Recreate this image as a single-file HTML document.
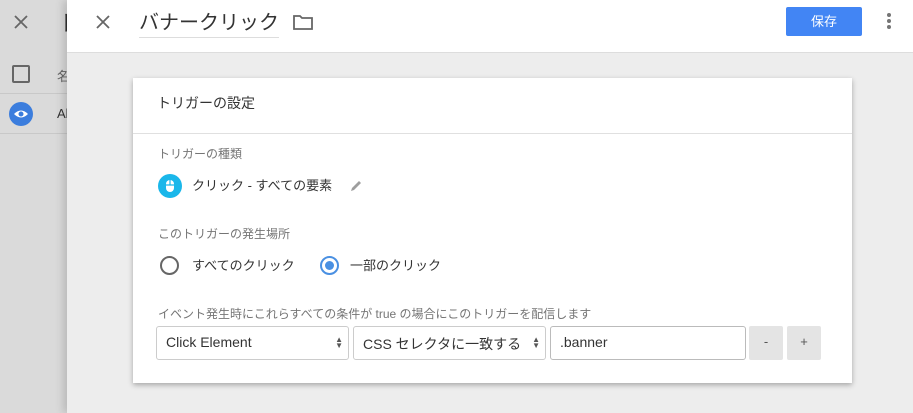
<!DOCTYPE html>
<html><head><meta charset="utf-8"><style>
*{box-sizing:border-box;margin:0;padding:0}
body{width:913px;height:413px;overflow:hidden;font-family:"Liberation Sans","Noto Sans CJK JP",sans-serif;background:#eeeeee;position:relative;color:#212121}
.left{position:absolute;left:0;top:0;width:67px;height:413px;background:#dadada;overflow:hidden}
.main{position:absolute;left:67px;top:0;width:846px;height:413px;background:#ededed;box-shadow:-4px 0 8px rgba(0,0,0,.15)}
.hdr{position:absolute;left:0;top:0;width:846px;height:53px;background:#fff;border-bottom:1px solid #ddd}
.card{position:absolute;left:133px;top:78px;width:719px;height:305px;background:#fff;box-shadow:0 2px 5px rgba(0,0,0,.3)}
.abs{position:absolute;white-space:nowrap}
.lbl{font-size:12px;color:#757575}
.sel{position:absolute;top:248px;height:34px;border:1px solid #ccc;border-radius:3px;font-size:14px;padding:7px 9px;color:#333;white-space:nowrap}
.btn{position:absolute;top:248px;width:34px;height:34px;background:#e4e4e4;border-radius:2px;text-align:center;line-height:32px;font-size:13px;color:#555}
.arr{position:absolute;right:5px;top:10px;font-size:8px;line-height:6px;color:#555}
</style></head><body>
<div class="left">
 <svg class="abs" style="left:13px;top:14px" width="16" height="16" viewBox="0 0 16 16"><path d="M2 2L14 14M14 2L2 14" stroke="#666" stroke-width="1.8"/></svg>
 <div class="abs" style="left:58px;top:6px;font-size:22px;color:#333">ト</div>
 <div class="abs" style="left:0;top:93px;width:67px;border-top:1px solid #c8c8c8"></div>
 <div class="abs" style="left:0;top:133px;width:67px;border-top:1px solid #c8c8c8"></div>
 <div class="abs" style="left:12px;top:65px;width:18px;height:18px;border:2px solid #666;border-radius:2px"></div>
 <div class="abs" style="left:57px;top:66px;font-size:13px;color:#666">名</div>
 <svg class="abs" style="left:9px;top:102px" width="24" height="24" viewBox="0 0 24 24"><circle cx="12" cy="12" r="12" fill="#3b7ddd"/><path d="M5 12Q12 5 19 12Q12 19 5 12Z" fill="#fff"/><circle cx="12" cy="12" r="2.5" fill="#3b7ddd"/></svg>
 <div class="abs" style="left:57px;top:106px;font-size:13px;color:#333">Al</div>
</div>
<div class="main">
 <div class="hdr">
  <svg class="abs" style="left:28px;top:14px" width="16" height="16" viewBox="0 0 16 16"><path d="M2 2L14 14M14 2L2 14" stroke="#666" stroke-width="1.8"/></svg>
  <div class="abs" style="left:72px;top:6px;font-size:20px;color:#333;width:140px;height:32px;border-bottom:1px solid #ddd">バナークリック</div>
  <svg class="abs" style="left:226px;top:14px" width="20" height="16" viewBox="0 0 20 16"><path d="M1 2h6l2 2h10v11H1Z" fill="none" stroke="#666" stroke-width="1.8"/></svg>
  <div class="abs" style="left:719px;top:7px;width:76px;height:29px;background:#4285f4;border-radius:2px;color:#fff;font-size:13px;text-align:center;line-height:29px">保存</div>
  <svg class="abs" style="left:818px;top:12px" width="8" height="20"><circle cx="4" cy="3" r="2" fill="#757575"/><circle cx="4" cy="9" r="2" fill="#757575"/><circle cx="4" cy="15" r="2" fill="#757575"/></svg>
 </div>
</div>
<div class="card">
 <div class="abs" style="left:24px;top:15px;font-size:14px;color:#333">トリガーの設定</div>
 <div class="abs" style="left:0;top:55px;width:719px;border-top:1px solid #e0e0e0"></div>
 <div class="abs lbl" style="left:25px;top:67px">トリガーの種類</div>
 <svg class="abs" style="left:25px;top:96px" width="24" height="24" viewBox="0 0 24 24"><circle cx="12" cy="12" r="12" fill="#1ab7ea"/><rect x="8" y="6" width="8" height="12" rx="4" fill="#fff"/><path d="M12 6v5M8 11h8" stroke="#1ab7ea" stroke-width="1.2"/></svg>
 <div class="abs" style="left:59px;top:97px;font-size:13px;color:#333">クリック - すべての要素</div>
 <svg class="abs" style="left:217px;top:101px" width="13" height="13" viewBox="0 0 13 13"><path d="M1 12l1-3 7-7 2 2-7 7z" fill="#9e9e9e"/></svg>
 <div class="abs lbl" style="left:25px;top:147px">このトリガーの発生場所</div>
 <div class="abs" style="left:27px;top:178px;width:19px;height:19px;border:2px solid #666;border-radius:50%"></div>
 <div class="abs" style="left:59px;top:177px;font-size:13px;color:#333">すべてのクリック</div>
 <div class="abs" style="left:187px;top:178px;width:19px;height:19px;border:2px solid #4a90e2;border-radius:50%"><div style="margin:3px;width:9px;height:9px;border-radius:50%;background:#4a90e2"></div></div>
 <div class="abs" style="left:217px;top:177px;font-size:13px;color:#333">一部のクリック</div>
 <div class="abs lbl" style="left:25px;top:227px">イベント発生時にこれらすべての条件が true の場合にこのトリガーを配信します</div>
 <div class="sel" style="left:23px;width:193px">Click Element<div class="arr">▲<br>▼</div></div>
 <div class="sel" style="left:220px;width:193px">CSS セレクタに一致する<div class="arr">▲<br>▼</div></div>
 <div class="sel" style="left:417px;width:196px;border-color:#bbb">.banner</div>
 <div class="btn" style="left:616px">-</div>
 <div class="btn" style="left:654px">+</div>
</div>
</body></html>
